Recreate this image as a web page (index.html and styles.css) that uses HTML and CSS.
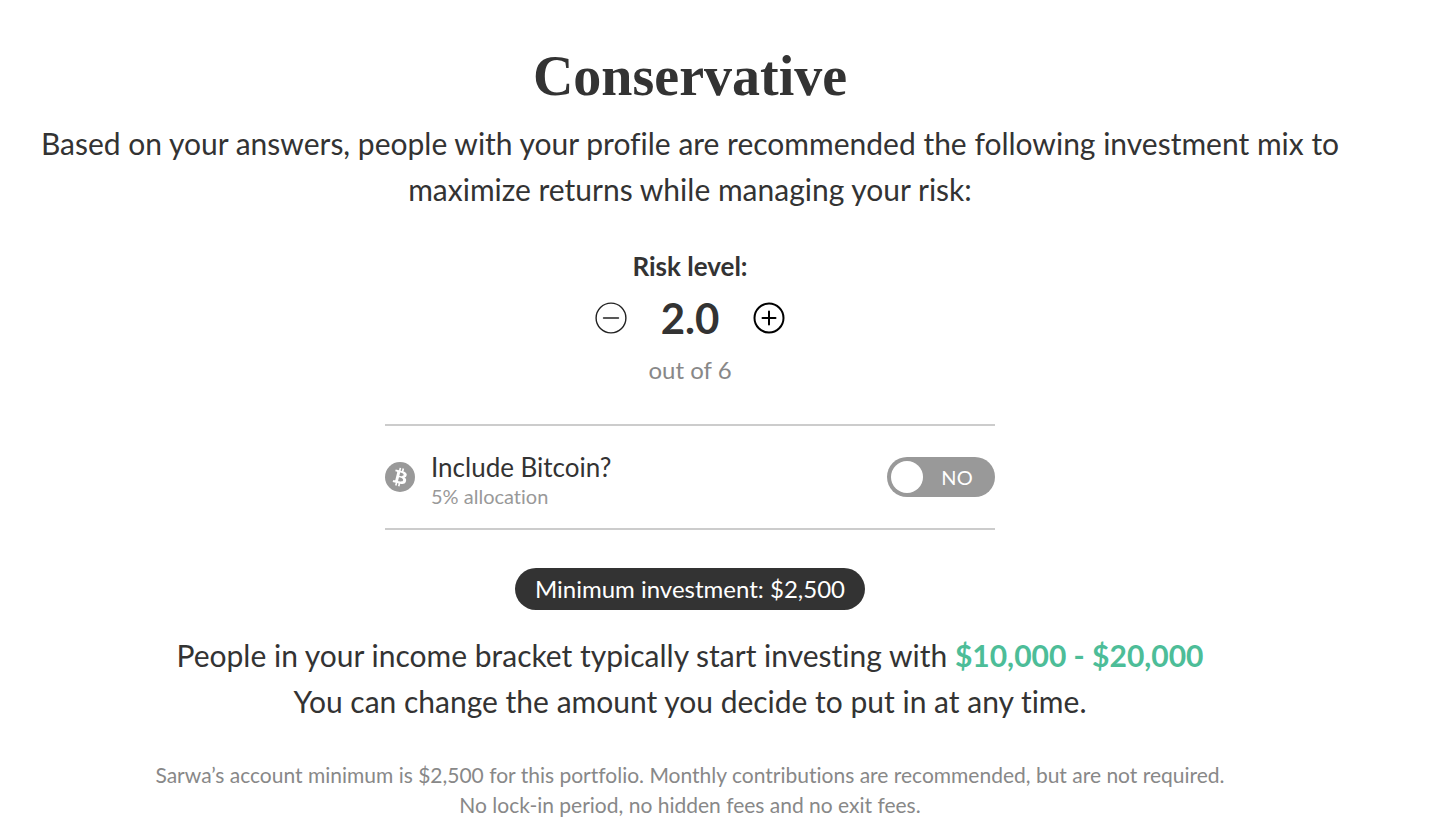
FILE: index.html
```html
<!DOCTYPE html>
<html lang="en">
<head>
  <meta charset="UTF-8">
  <meta name="viewport" content="width=device-width, initial-scale=1.0">
  <title>Sarwa - Your portfolio</title>
  <link rel="stylesheet" href="styles.css">
</head>
<body>
  <main class="portfolio">
    <h1 class="title">Conservative</h1>
    <p class="lead">Based on your answers, people with your profile are recommended the following investment mix to<br>maximize returns while managing your risk:</p>

    <section class="risk">
      <h2 class="risk-label">Risk level:</h2>
      <div class="risk-stepper">
        <button class="step-button" type="button" aria-label="Decrease risk level">
          <svg viewBox="0 0 32 32" fill="none" stroke="#222" stroke-width="1.4" stroke-linecap="round">
            <circle cx="16" cy="16" r="14.9"/>
            <path d="M8.5 16h15"/>
          </svg>
        </button>
        <span class="risk-value">2.0</span>
        <button class="step-button" type="button" aria-label="Increase risk level">
          <svg viewBox="0 0 32 32" fill="none" stroke="#000" stroke-width="2" stroke-linecap="round">
            <circle cx="16" cy="16" r="14.5"/>
            <path d="M9.5 16h13M16 9.5v13"/>
          </svg>
        </button>
      </div>
      <p class="risk-scale">out of 6</p>
    </section>

    <section class="bitcoin">
      <svg class="bitcoin-icon" viewBox="0 0 32 32" aria-hidden="true">
        <circle cx="16" cy="16" r="16" fill="#999"/>
        <path fill="#fff" d="M23.2 14c.3-2.100-1.300-3.300-3.500-4l.7-2.900-1.700-.4-.7 2.800-1.400-.3.700-2.800-1.700-.4-.7 2.900-1.100-.3-2.400-.6-.5 1.900 1.300.3c.7.200.8.600.8 1l-2 7.900c-.1.200-.3.500-.8.400l-1.300-.3-.8 2 3.300.8-.7 2.900 1.700.4.700-2.900 1.400.4-.7 2.800 1.700.5.700-2.900c3 .6 5.200.3 6.100-2.400.8-2.100 0-3.400-1.500-4.200 1.100-.2 1.900-1 2.200-2.500zm-3.900 5.500c-.5 2.100-4.200 1-5.400.7l1-3.900c1.200.3 5 .9 4.400 3.200zm.5-5.600c-.5 2-3.500 1-4.500.7l.9-3.500c1 .3 4.200.7 3.600 2.800z"/>
      </svg>
      <div class="bitcoin-text">
        <label class="bitcoin-title" for="include-bitcoin">Include Bitcoin?</label>
        <span class="bitcoin-note">5% allocation</span>
      </div>
      <label class="toggle">
        <input class="toggle-knob" type="checkbox" id="include-bitcoin">
        <span class="toggle-state">NO</span>
      </label>
    </section>

    <p class="minimum">Minimum investment: $2,500</p>

    <p class="lead">People in your income bracket typically start investing with <strong class="amount">$10,000 - $20,000</strong><br>You can change the amount you decide to put in at any time.</p>

    <p class="footnote">Sarwa’s account minimum is $2,500 for this portfolio. Monthly contributions are recommended, but are not required.<br>No lock-in period, no hidden fees and no exit fees.</p>
  </main>
</body>
</html>
```
FILE: styles.css
```css
* {
  margin: 0;
  padding: 0;
  box-sizing: border-box;
}

body {
  font-family: Lato, 'Open Sans', sans-serif;
  font-variant-ligatures: none;
  background: #fff;
  color: #333;
}

.portfolio {
  display: flex;
  flex-direction: column;
  align-items: center;
  padding: 40px 60px 0 0;
  text-align: center;
}

.title {
  font-family: 'Liberation Serif', serif;
  font-size: 56px;
  line-height: 72px;
  font-weight: 700;
  margin-bottom: 8px;
}

.lead {
  font-size: 30px;
  line-height: 46px;
}

.risk {
  display: flex;
  flex-direction: column;
  align-items: center;
  margin: 38px 0;
}

.risk-label {
  font-size: 26px;
  line-height: 32px;
  font-weight: 700;
}

.risk-stepper {
  display: flex;
  align-items: center;
  gap: 32px;
  height: 72px;
}

.step-button {
  width: 32px;
  height: 32px;
  border: none;
  background: none;
  cursor: pointer;
}

.step-button svg {
  display: block;
  width: 32px;
  height: 32px;
}

.risk-value {
  min-width: 62px;
  font-size: 42px;
  font-weight: 700;
}

.risk-scale {
  font-size: 24px;
  line-height: 32px;
  color: #888;
}

.bitcoin {
  display: flex;
  align-items: center;
  gap: 16px;
  width: 100%;
  max-width: 610px;
  padding: 18px 0;
  border-top: 2px solid #ccc;
  border-bottom: 2px solid #ccc;
  text-align: left;
}

.bitcoin-icon {
  width: 30px;
  height: 30px;
}

.bitcoin-text {
  display: flex;
  flex-direction: column;
  flex: 1;
  padding-top: 8px;
}

.bitcoin-title {
  font-size: 26px;
  line-height: 30px;
}

.bitcoin-note {
  font-size: 20px;
  line-height: 28px;
  color: #999;
}

.toggle {
  display: flex;
  align-items: center;
  width: 108px;
  height: 40px;
  padding: 4px;
  border-radius: 20px;
  background: #999;
  color: #fff;
  cursor: pointer;
}

.toggle-knob {
  appearance: none;
  width: 32px;
  height: 32px;
  border-radius: 50%;
  background: #fff;
  cursor: pointer;
}

.toggle-state {
  flex: 1;
  font-size: 20px;
  text-align: center;
}

.minimum {
  margin: 38px 0 22px;
  padding: 0 20px;
  border-radius: 21px;
  background: #333;
  color: #fff;
  font-size: 24px;
  line-height: 42px;
}

.amount {
  font-weight: 700;
  color: #4dbd98;
}

.footnote {
  margin-top: 36px;
  font-size: 21px;
  line-height: 30px;
  color: #888;
}
```
